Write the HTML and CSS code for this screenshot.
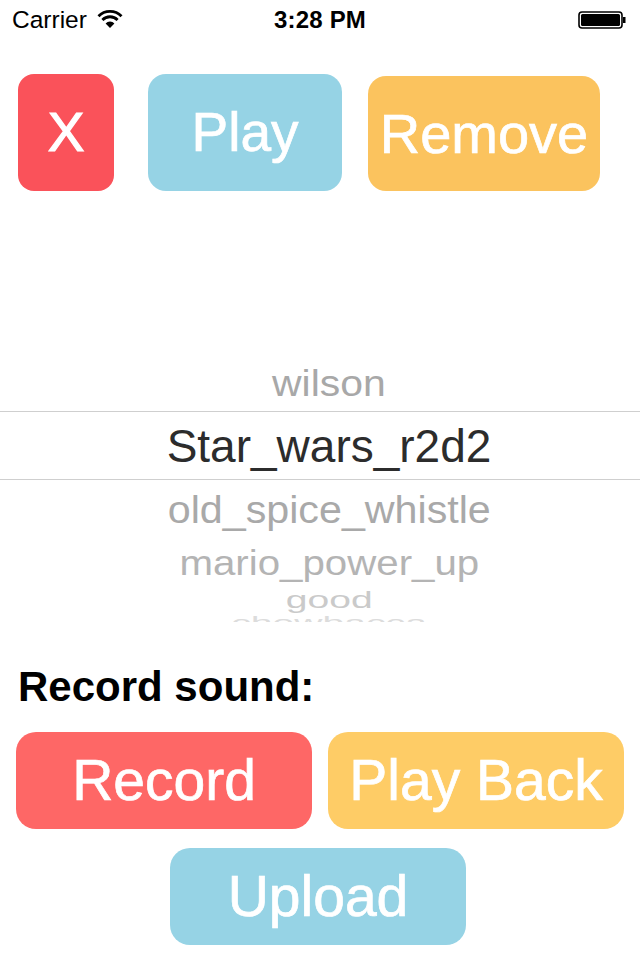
FILE: index.html
```html
<!DOCTYPE html>
<html lang="en">
<head>
<meta charset="utf-8">
<title>Sounds</title>
<link rel="stylesheet" href="styles.css">
</head>
<body>
<div class="screen">
  <div class="status">
    <div class="carrier">
      <span>Carrier</span>
      <svg class="wifi" width="26" height="20" viewBox="0 0 26 20">
        <path d="M1.5 7.2 A16 16 0 0 1 24.5 7.2" fill="none" stroke="#000" stroke-width="2.8"/>
        <path d="M5.4 11 A10.5 10.5 0 0 1 20.6 11" fill="none" stroke="#000" stroke-width="2.8"/>
        <path d="M8.6 14.4 A6 6 0 0 1 17.4 14.4 L13 19 Z" fill="#000"/>
      </svg>
    </div>
    <div class="time">3:28 PM</div>
    <div class="battery">
      <svg width="50" height="20" viewBox="0 0 50 20">
        <rect x="1" y="2" width="43" height="16" rx="3" ry="3" fill="none" stroke="#000" stroke-width="1.6"/>
        <rect x="3" y="4" width="39" height="12" rx="1.5" fill="#000"/>
        <rect x="45" y="7" width="2.5" height="6" fill="#000"/>
      </svg>
    </div>
  </div>

  <div class="top-row">
    <button class="btn btn-x">X</button>
    <button class="btn btn-play">Play</button>
    <button class="btn btn-remove">Remove</button>
  </div>

  <div class="picker">
    <div class="row row-wilson"><span>wilson</span></div>
    <div class="row row-selected"><span>Star_wars_r2d2</span></div>
    <div class="row row-spice"><span>old_spice_whistle</span></div>
    <div class="row row-mario"><span>mario_power_up</span></div>
    <div class="row row-good"><span>good</span></div>
    <div class="row row-chewie"><span>chewbacca</span></div>
  </div>

  <div class="label">Record sound:</div>

  <div class="rec-grid">
    <button class="btn btn-record">Record</button>
    <button class="btn btn-playback">Play Back</button>
    <button class="btn btn-upload">Upload</button>
  </div>
</div>
</body>
</html>
```

FILE: styles.css
```css
* { box-sizing: border-box; }

html, body {
  margin: 0;
  padding: 0;
  background: #fff;
}

body {
  font-family: "Liberation Sans", Arial, sans-serif;
  width: 640px;
  height: 960px;
  overflow: hidden;
}

.screen {
  width: 640px;
  height: 960px;
  display: flex;
  flex-direction: column;
}

/* status bar */
.status {
  height: 40px;
  flex: none;
  display: grid;
  grid-template-columns: 1fr auto 1fr;
  align-items: center;
  color: #000;
}

.carrier {
  display: flex;
  align-items: center;
  gap: 10px;
  padding-left: 12px;
  font-size: 24.5px;
}

.wifi {
  margin-top: -2px;
}

.time {
  font-weight: bold;
  font-size: 24px;
  letter-spacing: 0.2px;
}

.battery {
  display: flex;
  justify-content: flex-end;
  padding-right: 12px;
}

/* buttons */
.btn {
  border: none;
  margin: 0;
  padding: 0;
  color: #fff;
  font-family: "Liberation Sans", Arial, sans-serif;
  font-size: 56px;
  font-weight: normal;
  line-height: 1;
  display: flex;
  align-items: center;
  justify-content: center;
  white-space: nowrap;
  -webkit-text-stroke: 0.7px #fff;
}

.top-row {
  flex: none;
  display: flex;
  align-items: flex-end;
  padding: 34px 0 0 18px;
  height: 151px;
}

.btn-x {
  width: 96px;
  height: 117px;
  margin-right: 34px;
  background: #fa525a;
  border-radius: 16px;
  font-size: 55px;
  -webkit-text-stroke: 1.2px #fff;
}

.btn-play {
  width: 194px;
  height: 117px;
  margin-right: 26px;
  background: #96d3e5;
  border-radius: 18px;
  font-size: 55px;
}

.btn-remove {
  width: 232px;
  height: 115px;
  background: #fbc35e;
  border-radius: 18px;
}

/* picker */
.picker {
  flex: none;
  height: 431px;
  overflow: hidden;
  padding-top: 164px;
  display: flex;
  flex-direction: column;
}

.row {
  display: flex;
  align-items: center;
  justify-content: center;
  padding-left: 18px;
  font-size: 46px;
  line-height: 1;
  flex: none;
}

.row span {
  display: inline-block;
  white-space: nowrap;
}

.row-wilson {
  height: 56px;
  color: #a8a8a8;
}
.row-wilson span { transform: scale(0.89, 0.8); }

.row-selected {
  height: 69px;
  border-top: 1px solid #cfcfcf;
  border-bottom: 1px solid #cfcfcf;
  color: #2c2c2c;
}

.row-spice {
  height: 58px;
  color: #a9a9a9;
}
.row-spice span { transform: scale(0.896, 0.85); }

.row-mario {
  height: 50px;
  color: #b4b4b4;
}
.row-mario span { transform: scale(0.875, 0.76); }

.row-good {
  height: 24px;
  color: #cacaca;
}
.row-good span { transform: scale(0.85, 0.52); }

.row-chewie {
  height: 22px;
  color: #dcdcdc;
}
.row-chewie span { transform: scale(0.85, 0.4); }

/* record section */
.label {
  flex: none;
  margin-top: 41px;
  padding-left: 18px;
  font-size: 42px;
  font-weight: bold;
  line-height: 48px;
  color: #000;
}

.rec-grid {
  margin-top: 21px;
  padding: 0 16px;
  display: grid;
  grid-template-columns: 296px 296px;
  column-gap: 16px;
  row-gap: 19px;
}

.btn-record,
.btn-playback,
.btn-upload {
  height: 97px;
  border-radius: 20px;
  font-size: 57px;
}

.btn-record { background: #fe6766; }
.btn-playback { background: #fecc66; }

.btn-upload {
  grid-column: 1 / span 2;
  justify-self: start;
  margin-left: 154px;
  width: 296px;
  background: #96d3e5;
}
```
